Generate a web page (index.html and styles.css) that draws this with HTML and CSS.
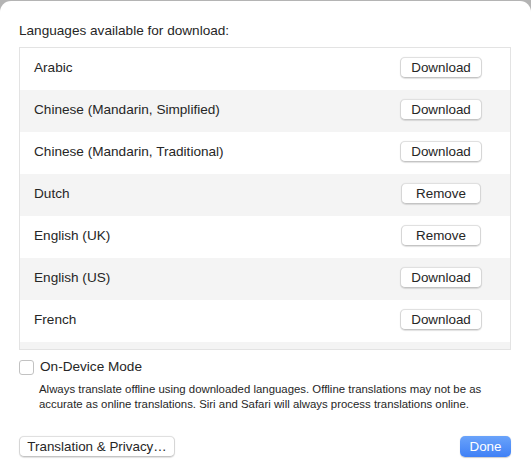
FILE: index.html
```html
<!DOCTYPE html>
<html>
<head>
<meta charset="utf-8">
<link rel="stylesheet" href="styles.css">
</head>
<body>
<div class="sheet">
  <div class="title">Languages available for download:</div>
  <div class="list">
    <div class="row"><span class="name">Arabic</span><button class="btn dl">Download</button></div>
    <div class="row"><span class="name">Chinese (Mandarin, Simplified)</span><button class="btn dl">Download</button></div>
    <div class="row"><span class="name">Chinese (Mandarin, Traditional)</span><button class="btn dl">Download</button></div>
    <div class="row"><span class="name">Dutch</span><button class="btn rm">Remove</button></div>
    <div class="row"><span class="name">English (UK)</span><button class="btn rm">Remove</button></div>
    <div class="row"><span class="name">English (US)</span><button class="btn dl">Download</button></div>
    <div class="row"><span class="name">French</span><button class="btn dl">Download</button></div>
    <div class="row"><span class="name">German</span><button class="btn dl">Download</button></div>
  </div>
  <div class="option">
    <span class="check"></span>
    <span class="optlabel">On-Device Mode</span>
  </div>
  <div class="desc">Always translate offline using downloaded languages. Offline translations may not be as accurate as online translations. Siri and Safari will always process translations online.</div>
  <div class="footer">
    <button class="btn privacy">Translation &amp; Privacy…</button>
    <button class="done">Done</button>
  </div>
</div>
</body>
</html>
```

FILE: styles.css
```css
html, body {
  margin: 0;
  padding: 0;
}
body {
  background: #b4b4b4;
  width: 531px;
  height: 469px;
  overflow: hidden;
  font-family: "Liberation Sans", Arial, sans-serif;
  color: #262626;
}
.sheet {
  margin-top: 1px;
  height: 468px;
  background: #ffffff;
  border-radius: 11px 11px 0 0;
  padding: 0 20px 0 19px;
  box-sizing: border-box;
}
.title {
  padding-top: 21px;
  font-size: 13.6px;
  line-height: 17px;
  height: 17px;
}
.list {
  margin-top: 8px;
  border: 1px solid #e3e3e3;
  height: 301px;
  overflow: hidden;
}
.row {
  height: 42px;
  display: flex;
  align-items: center;
  justify-content: space-between;
  padding: 0 28px 0 14px;
}
.row:nth-child(even) {
  background: #f4f4f4;
}
.row:nth-child(8) span, .row:nth-child(8) button {
  visibility: hidden;
}
.name {
  font-size: 13.6px;
  margin-top: -3px;
}
.btn {
  font-family: "Liberation Sans", Arial, sans-serif;
  font-size: 13.4px;
  color: #262626;
  background: #ffffff;
  border: 1px solid #d6d6d6;
  border-top-color: #e0e0e0;
  border-bottom-color: #c4c4c4;
  border-radius: 5px;
  height: 21px;
  padding: 0;
  box-shadow: 0 0.5px 1px rgba(0,0,0,0.12);
  margin-top: -3px;
}
.dl {
  width: 82px;
}
.rm {
  width: 80px;
  margin-right: 1px;
}
.option {
  margin-top: 9px;
  display: flex;
  align-items: center;
  height: 16px;
}
.check {
  width: 13px;
  height: 13px;
  border: 1px solid #c2c2c2;
  border-radius: 3px;
  background: #fff;
  box-sizing: content-box;
  margin-top: 1px;
}
.optlabel {
  font-size: 13.6px;
  margin-left: 6px;
  margin-top: -1px;
}
.desc {
  margin-top: 7px;
  margin-left: 20px;
  font-size: 11.4px;
  line-height: 15px;
  color: #262626;
  width: 470px;
}
.footer {
  margin-top: 24px;
  display: flex;
  justify-content: space-between;
  align-items: center;
}
.privacy {
  width: 156px;
  margin-top: 0;
}
.done {
  font-family: "Liberation Sans", Arial, sans-serif;
  font-size: 13.4px;
  color: #ffffff;
  background: linear-gradient(#6aa3fa, #3f80f6);
  border: none;
  border-radius: 5px;
  height: 21px;
  width: 51px;
  padding: 0;
  box-shadow: 0 0.5px 1px rgba(0,0,0,0.2);
}
```
